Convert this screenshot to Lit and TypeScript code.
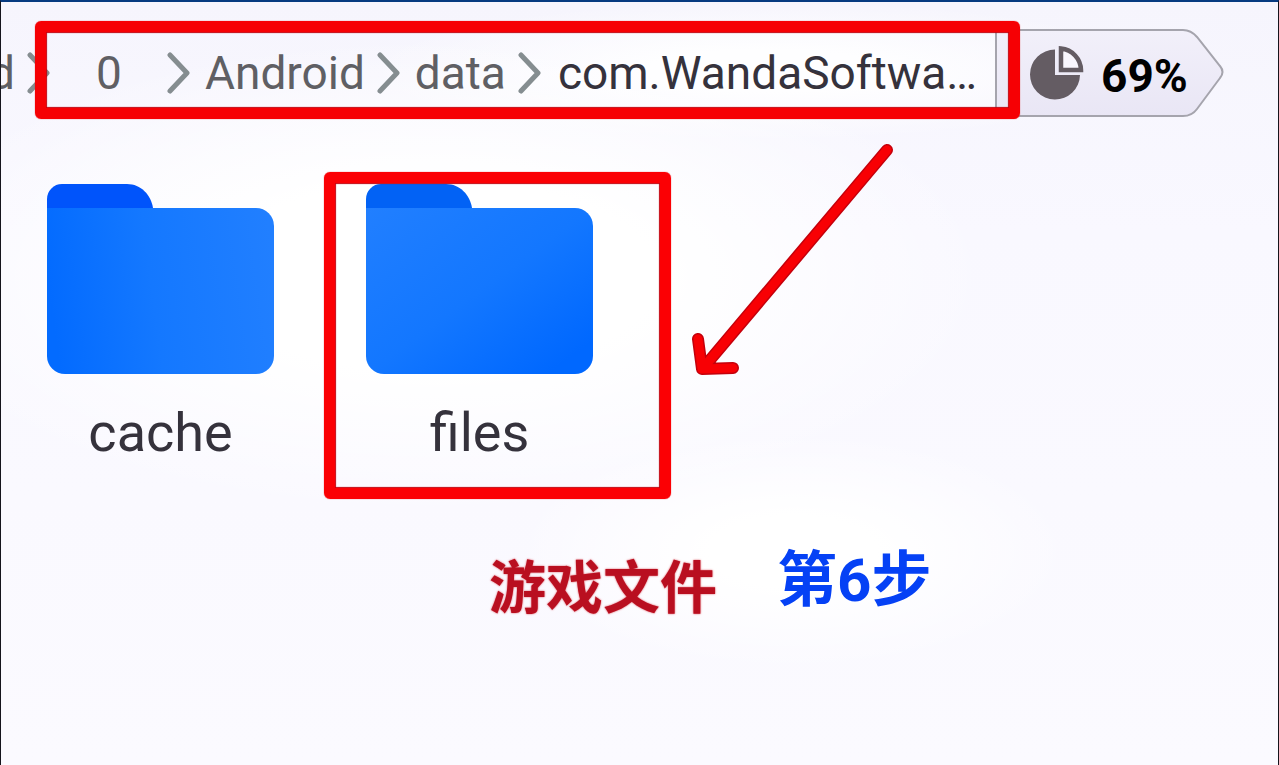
import { LitElement, html, css, svg } from "lit";
import { customElement, property } from "lit/decorators.js";

@customElement("folder-icon")
class FolderIcon extends LitElement {
  @property() tone = "left";

  static styles = css`
    :host { display: block; }
    .icon { display: block; width: 228px; height: 190px; }
  `;

  render() {
    const left = this.tone === "left";
    return html`
      <svg class="icon" viewBox="0 0 228 190" aria-hidden="true">
        <defs>
          <linearGradient id="body" x1="0" y1=${left ? "0.4" : "0"} x2="1" y2=${left ? "0.3" : "1"}>
            ${left
              ? svg`<stop offset="0" stop-color="#036bff"/><stop offset="0.45" stop-color="#1478ff"/><stop offset="1" stop-color="#217fff"/>`
              : svg`<stop offset="0" stop-color="#217fff"/><stop offset="0.5" stop-color="#1377ff"/><stop offset="0.9" stop-color="#0068ff"/>`}
          </linearGradient>
        </defs>
        <path d="M0 30V15A15 15 0 0 1 15 0H80C94 0 104 11 106 24V34H0Z" fill=${left ? "#0054fb" : "#0262f5"} />
        <path d="M0 24H209A18 18 0 0 1 227 42V172A18 18 0 0 1 209 190H18A18 18 0 0 1 0 172Z" fill="url(#body)" />
      </svg>
    `;
  }
}

@customElement("app-root")
class AppRoot extends LitElement {
  static styles = css`
    :host {
      display: block;
      box-sizing: border-box;
      min-height: 100vh;
      overflow: hidden;
      border: solid #15141c;
      border-width: 2px 1px 0 1px;
      border-top-color: #063a80;
      font-family: Roboto, "Noto Sans CJK SC", sans-serif;
      color: #35323c;
      background:
        radial-gradient(ellipse 280px 120px at 62% 72%, #ffffff 30%, transparent),
        radial-gradient(ellipse 560px 240px at 34% 36%, #ffffff 40%, transparent),
        radial-gradient(ellipse 400px 70px at 60% 9%, #fefeff 30%, transparent),
        linear-gradient(#f6f5fd, #f9f8ff 30%, #fbfaff);
    }
    .bar {
      display: flex;
      height: 88px;
      padding: 27px 54px 0 0;
    }
    .crumbs {
      position: relative;
      flex: 1;
      display: flex;
      align-items: center;
      min-width: 0;
      z-index: 1;
    }
    .crumbs::after {
      content: "";
      position: absolute;
      inset: -8px -25px -2px 34px;
      border: 11px solid #f60004;
      border-radius: 6px;
      box-shadow: inset 0 0 1px 1px #c4000c, 0 0 1px #e00008;
      pointer-events: none;
    }
    .crumb {
      font-size: 46px;
      line-height: 56px;
      color: #5f5f64;
      text-decoration: none;
      white-space: nowrap;
      padding: 0 12px 0 14px;
    }
    .crumb.cut {
      display: flex;
      justify-content: flex-end;
      width: 14px;
      padding: 0 12px 0 0;
    }
    .crumb.short { width: 116px; padding: 0; text-align: center; }
    .crumb.current { color: #35323c; padding-left: 16px; }
    .chevron { flex: none; width: 24px; height: 42px; }
    .usage {
      position: relative;
      flex: none;
      display: flex;
      align-items: center;
      gap: 17px;
      width: 229px;
      box-sizing: border-box;
      padding-left: 35px;
    }
    .tag { position: absolute; inset: 0; width: 100%; height: 100%; }
    .pie { position: relative; width: 54px; height: 54px; }
    .percent {
      position: relative;
      font-size: 46px;
      line-height: 56px;
      padding-top: 6px;
      font-weight: 700;
      color: #000;
    }
    .folders {
      display: flex;
      gap: 92px;
      margin: 0;
      padding: 67px 46px 0;
      list-style: none;
    }
    .folder { position: relative; }
    .open {
      display: block;
      width: 227px;
      padding: 0;
      border: 0;
      background: none;
      font: inherit;
      font-size: 54px;
      line-height: 64px;
      color: inherit;
      text-align: center;
    }
    .name { display: block; padding-top: 27px; }
    .marked::after {
      content: "";
      position: absolute;
      inset: -12px -78px -34px -42px;
      border: 11px solid #fb0004;
      border-radius: 6px;
      box-shadow: inset 0 0 1px 1px #c4000c, 0 0 1px #e00008;
      pointer-events: none;
    }
    .arrow {
      position: absolute;
      left: 326px;
      top: -40px;
      width: 200px;
      height: 234px;
      overflow: visible;
    }
    .notes {
      display: flex;
      align-items: flex-end;
      gap: 60px;
      padding: 80px 0 0 488px;
      line-height: 72px;
      font-weight: 700;
    }
    .note, .step { margin: 0; white-space: nowrap; }
    .note {
      font-size: 57px;
      color: #b90f20;
      text-shadow: 0 0 2px #d8404c;
    }
    .step { font-size: 60px; color: #0541f5; padding-bottom: 8px; }
  `;

  private chevron() {
    return html`<svg class="chevron" viewBox="0 0 24 42" aria-hidden="true">
      <path d="M3 3L20 21L3 39" fill="none" stroke="#858d90" stroke-width="5" stroke-linecap="round" stroke-linejoin="round" />
    </svg>`;
  }

  render() {
    return html`
      <header class="bar">
        <nav class="crumbs" aria-label="Path">
          <a class="crumb cut" href="#">d</a>
          ${this.chevron()}
          <a class="crumb short" href="#">0</a>
          ${this.chevron()}
          <a class="crumb" href="#">Android</a>
          ${this.chevron()}
          <a class="crumb" href="#">data</a>
          ${this.chevron()}
          <a class="crumb current" href="#" aria-current="page">com.WandaSoftwa…</a>
        </nav>
        <div class="usage">
          <svg class="tag" viewBox="0 0 229 88" preserveAspectRatio="none" aria-hidden="true">
            <defs>
              <linearGradient id="tag" x1="0" y1="0" x2="0" y2="1">
                <stop offset="0" stop-color="#f2f0fa" />
                <stop offset="1" stop-color="#e9e6f5" />
              </linearGradient>
            </defs>
            <path d="M1 1H188Q196 1 202 8L225 37Q230 43 225 49L202 80Q197 87 188 87H1Z" fill="url(#tag)" stroke="#a5a4ad" stroke-width="2" />
          </svg>
          <svg class="pie" viewBox="0 0 54 54" aria-hidden="true">
            <path d="M25 3.5A25 25 0 1 0 50 29H25Z" fill="#645c63" />
            <path d="M31 2.5A22 22 0 0 1 51 24H31Z" fill="#f8f6fd" stroke="#645c63" stroke-width="4.5" />
          </svg>
          <span class="percent">69%</span>
        </div>
      </header>
      <main>
        <ul class="folders">
          <li class="folder">
            <button class="open"><folder-icon tone="left"></folder-icon><span class="name">cache</span></button>
          </li>
          <li class="folder marked">
            <button class="open"><folder-icon tone="right"></folder-icon><span class="name">files</span></button>
            <svg class="arrow" viewBox="0 0 200 234" aria-hidden="true">
              <path d="M195 6L12 223M6 195L10 225L41 224" fill="none" stroke="#c4000c" stroke-width="12" stroke-linecap="round" stroke-linejoin="round" />
              <path d="M195 6L12 223M6 195L10 225L41 224" fill="none" stroke="#f80004" stroke-width="9" stroke-linecap="round" stroke-linejoin="round" />
            </svg>
          </li>
        </ul>
        <div class="notes">
          <p class="note">游戏文件</p>
          <p class="step">第6步</p>
        </div>
      </main>
    `;
  }
}
